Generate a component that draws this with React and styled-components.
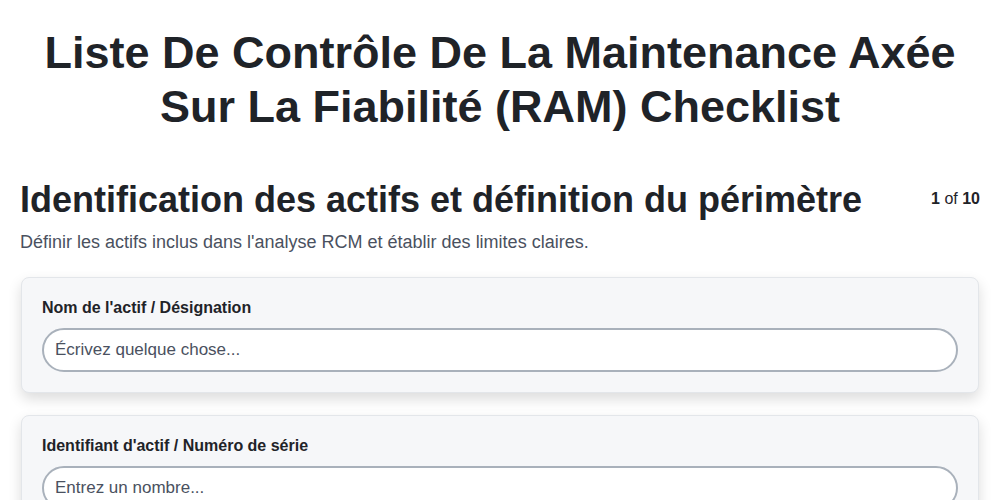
import React from 'react';
import styled, { createGlobalStyle } from 'styled-components';

const GlobalStyle = createGlobalStyle`
    body {
        margin: 0;
        background: #ffffff;
        font-family: 'Liberation Sans', Arial, sans-serif;
        color: #1f2328;
    }
`

const Page = styled.div`
    padding: 26px 20px 40px;
`

const Title = styled.h1`
    margin: 0 0 44px;
    text-align: center;
    font-size: 45px;
    line-height: 54px;
    font-weight: 700;
    color: #1f2328;
`

const SectionHeader = styled.div`
    display: flex;
    justify-content: space-between;
    align-items: flex-start;
`

const SectionTitle = styled.h2`
    margin: 0;
    font-size: 36px;
    line-height: 44px;
    font-weight: 700;
    color: #1f2328;
`

const StepCount = styled.span`
    margin-top: 12px;
    font-size: 16px;
    line-height: 18px;
    color: #1f2328;

    b {
        font-weight: 700;
    }
`

const Description = styled.p`
    margin: 10px 0 24px;
    font-size: 18px;
    line-height: 21px;
    color: #4a5160;
`

const Card = styled.div`
    background: #f6f7f9;
    border: 1px solid #e3e6ea;
    border-radius: 8px;
    padding: 20px;
    margin: 0 1px 22px;
    box-shadow: 0 6px 14px rgba(0, 0, 0, 0.14);
`

const Label = styled.label`
    display: block;
    font-size: 16px;
    line-height: 19px;
    font-weight: 700;
    color: #1f2328;
    margin-bottom: 11px;
`

const Input = styled.input`
    box-sizing: border-box;
    width: 100%;
    height: 44px;
    padding: 0 11px;
    border: 2px solid #a9b1bb;
    border-radius: 22px;
    background: #ffffff;
    font-family: 'Liberation Sans', Arial, sans-serif;
    font-size: 17px;
    color: #1f2328;
    outline: none;

    &::placeholder {
        color: #4a5160;
    }
`

const fields = [
    { label: "Nom de l'actif / Désignation", placeholder: 'Écrivez quelque chose...', type: 'text' },
    { label: "Identifiant d'actif / Numéro de série", placeholder: 'Entrez un nombre...', type: 'text' },
];

function Field({ field }) {
    return (
        <Card>
            <Label>{field.label}</Label>
            <Input type={field.type} placeholder={field.placeholder} />
        </Card>
    )
}

export default function App() {
    return (
        <Page>
            <GlobalStyle />
            <Title>Liste De Contrôle De La Maintenance Axée Sur La Fiabilité (RAM) Checklist</Title>
            <SectionHeader>
                <SectionTitle>Identification des actifs et définition du périmètre</SectionTitle>
                <StepCount><b>1</b> of <b>10</b></StepCount>
            </SectionHeader>
            <Description>Définir les actifs inclus dans l'analyse RCM et établir des limites claires.</Description>
            {fields.map((f) => <Field key={f.label} field={f} />)}
        </Page>
    )
}
